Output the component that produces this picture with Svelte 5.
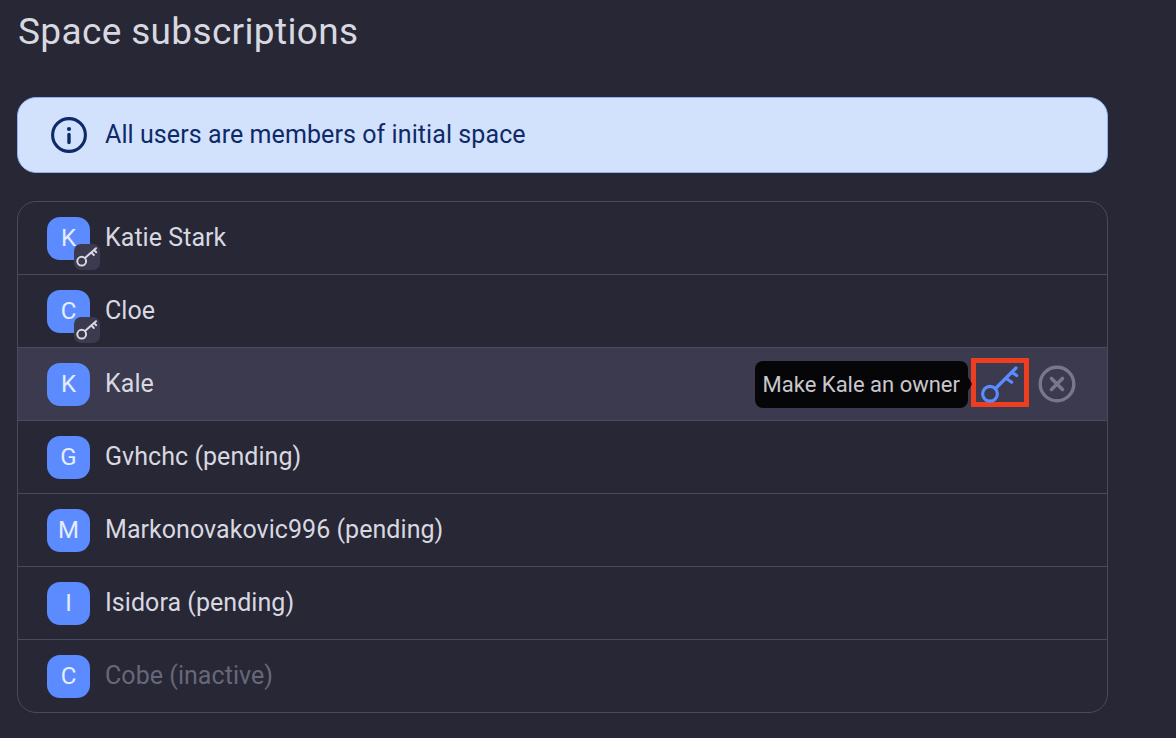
<script lang="ts">
  interface Member {
    name: string;
    initial: string;
    owner?: boolean;
    hovered?: boolean;
    inactive?: boolean;
  }

  const members: Member[] = [
    { name: "Katie Stark", initial: "K", owner: true },
    { name: "Cloe", initial: "C", owner: true },
    { name: "Kale", initial: "K", hovered: true },
    { name: "Gvhchc (pending)", initial: "G" },
    { name: "Markonovakovic996 (pending)", initial: "M" },
    { name: "Isidora (pending)", initial: "I" },
    { name: "Cobe (inactive)", initial: "C", inactive: true },
  ];
</script>

<main class="page">
  <h1>Space subscriptions</h1>

  <div class="alert">
    <svg class="info" viewBox="0 0 36 36" width="36" height="36" fill="none">
      <circle cx="18" cy="18" r="16.4" stroke="currentColor" stroke-width="3.1" />
      <circle cx="18" cy="12" r="2.1" fill="currentColor" />
      <path d="M18 17.5v8" stroke="currentColor" stroke-width="3.4" stroke-linecap="round" />
    </svg>
    <span class="alert-text">All users are members of initial space</span>
  </div>

  <ul class="list">
    {#each members as m}
      <li class="row" class:hovered={m.hovered}>
        <div class="avatar">
          {m.initial}
          {#if m.owner}
            <span class="badge">
              <svg viewBox="0 0 22 22" width="22" height="22" fill="none" stroke="currentColor" stroke-width="2" stroke-linecap="round">
                <circle cx="5.7" cy="15.2" r="4.4" />
                <path d="M9 12 20 2.2M15.4 6.4l2.4 2.6M18 4l2.2 2.2" />
              </svg>
            </span>
          {/if}
        </div>
        <span class="name" class:inactive={m.inactive}>{m.name}</span>
        {#if m.hovered}
          <div class="actions">
            <div class="tooltip">Make {m.name} an owner</div>
            <button class="key" aria-label="Make owner">
              <svg viewBox="0 0 40 40" width="40" height="40" fill="none" stroke="currentColor" stroke-width="3.2" stroke-linecap="round">
                <circle cx="10" cy="30.8" r="7.4" />
                <path d="M15.5 25.5 36 5M26.7 15.8l5 3.4M31.7 9.2l5 3.3" />
              </svg>
            </button>
            <button class="remove" aria-label="Remove">
              <svg viewBox="0 0 38 38" width="38" height="38" fill="none" stroke="currentColor" stroke-width="3.4" stroke-linecap="round">
                <circle cx="19" cy="19" r="16.8" />
                <path d="m13.5 13.5 11 11M24.5 13.5l-11 11" stroke-width="3.6" />
              </svg>
            </button>
          </div>
        {/if}
      </li>
    {/each}
  </ul>
</main>

<style>
  :global(body) {
    background: #272735;
    overflow: hidden;
  }
  .page {
    width: 1091px;
    height: 738px;
    padding: 0 0 0 17px;
    font-family: Roboto, "Liberation Sans", sans-serif;
    color: #d8d8e0;
  }
  h1 {
    margin: 0;
    height: 97px;
    padding: 11px 0 0 1px;
    box-sizing: border-box;
    font-size: 37px;
    line-height: 42px;
    font-weight: 400;
    letter-spacing: 0.35px;
    color: #d8d8e0;
  }
  .alert {
    display: flex;
    align-items: center;
    gap: 18px;
    height: 76px;
    box-sizing: border-box;
    padding-left: 33px;
    background: #d3e2fc;
    border: 1px solid #8fb0f0;
    border-radius: 19px;
    color: #0f2a68;
    font-size: 25px;
    margin-bottom: 28px;
  }
  .alert-text {
    padding-bottom: 2px;
    letter-spacing: 0.08px;
  }
  .info {
    flex: none;
  }
  .list {
    list-style: none;
    margin: 0;
    padding: 0;
    border: 1px solid #4a4a5c;
    border-radius: 19px;
    overflow: hidden;
  }
  .row {
    position: relative;
    display: flex;
    align-items: center;
    height: 73px;
    box-sizing: border-box;
    padding-left: 29px;
    border-top: 1px solid #4a4a5c;
  }
  .row:first-child {
    border-top: none;
    height: 72px;
  }
  .row.hovered {
    background: #3b3a4f;
  }
  .avatar {
    position: relative;
    flex: none;
    width: 43px;
    height: 43px;
    border-radius: 13px;
    background: #5b8bff;
    color: #e6edff;
    display: flex;
    align-items: center;
    justify-content: center;
    font-size: 24px;
    font-weight: 450;
  }
  .badge {
    position: absolute;
    right: -10px;
    bottom: -10px;
    width: 26px;
    height: 26px;
    border-radius: 7px;
    background: #3b3a4f;
    color: #d8d8e0;
    display: flex;
    align-items: center;
    justify-content: center;
  }
  .name {
    margin-left: 15px;
    padding-bottom: 2px;
    font-size: 25px;
    letter-spacing: 0.05px;
    color: #d8d8e0;
  }
  .name.inactive {
    color: #67677a;
  }
  .actions {
    margin-left: auto;
    padding-right: 31px;
    display: flex;
    align-items: center;
    gap: 3px;
  }
  .tooltip {
    position: relative;
    background: #060608;
    color: #c8c8ce;
    font-size: 22px;
    height: 47px;
    line-height: 47px;
    padding: 0 8px;
    border-radius: 8px;
  }
  .tooltip::after {
    content: "";
    position: absolute;
    right: -4px;
    top: 50%;
    margin-top: -7px;
    border-left: 4px solid #060608;
    border-top: 7px solid transparent;
    border-bottom: 7px solid transparent;
  }
  button {
    background: none;
    border: none;
    padding: 0;
    display: flex;
    align-items: center;
    justify-content: center;
  }
  .key {
    border: 5px solid #ee3e22;
    color: #5b8bff;
    box-sizing: content-box;
    width: 48px;
    height: 39px;
    margin: 0 6px 3px 0;
  }
  .remove {
    color: #78788a;
  }
</style>
